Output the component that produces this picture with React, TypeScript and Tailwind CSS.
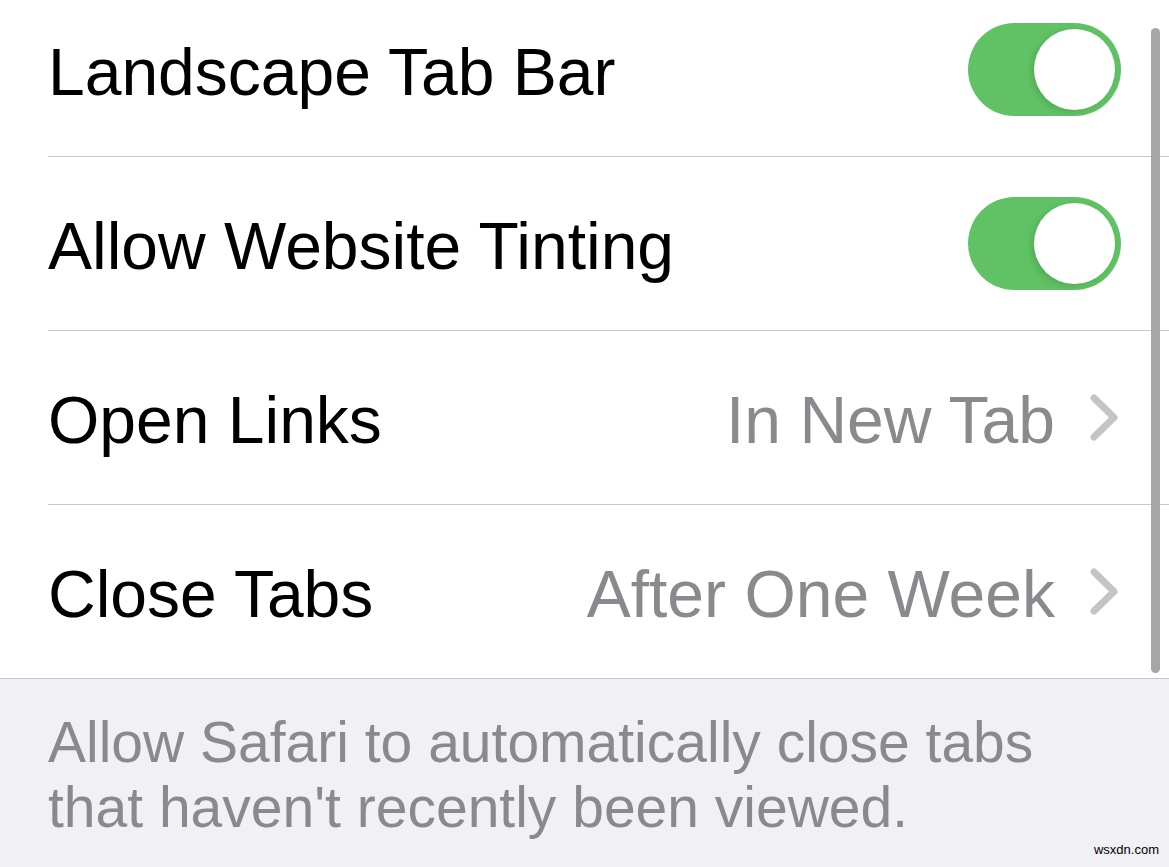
import React from "react";

const font = { fontFamily: '"Liberation Sans", Arial, sans-serif' };

function Toggle() {
  return (
    <div className="w-[153px] h-[93px] rounded-full bg-[#60c264] flex items-center justify-end pr-[6px] shrink-0">
      <div className="w-[81px] h-[81px] rounded-full bg-white shadow-[-3px_2px_6px_rgba(0,0,0,0.12)]" />
    </div>
  );
}

function Chevron() {
  return (
    <svg width="30" height="49" viewBox="0 0 30 49" className="shrink-0">
      <polyline
        points="5,5 25,24.5 5,44"
        fill="none"
        stroke="#c4c4c7"
        strokeWidth="7"
        strokeLinecap="round"
        strokeLinejoin="round"
      />
    </svg>
  );
}

function Row({
  label,
  children,
  divider = true,
}: {
  label: string;
  children: React.ReactNode;
  divider?: boolean;
}) {
  return (
    <div className="pl-[48px] bg-white">
      <div
        className={
          "flex items-center justify-between " +
          (divider ? "h-[174px] border-b border-[#c8c8cc]" : "h-[173px]")
        }
      >
        <span className="pt-[4px] text-[66px] leading-none text-black whitespace-nowrap">{label}</span>
        {children}
      </div>
    </div>
  );
}

export default function App() {
  return (
    <div className="relative w-[1169px] h-[867px] overflow-hidden bg-white" style={font}>
      <div className="-mt-[17px]">
        <Row label="Landscape Tab Bar">
          <div className="pr-[48px]">
            <Toggle />
          </div>
        </Row>
        <Row label="Allow Website Tinting">
          <div className="pr-[48px]">
            <Toggle />
          </div>
        </Row>
        <Row label="Open Links">
          <div className="flex items-center gap-[34px] pr-[50px]">
            <span className="pt-[4px] text-[66px] leading-none text-[#8a8a8e]">In New Tab</span>
            <Chevron />
          </div>
        </Row>
        <Row label="Close Tabs" divider={false}>
          <div className="flex items-center gap-[34px] pr-[50px]">
            <span className="pt-[4px] text-[66px] leading-none text-[#8a8a8e]">After One Week</span>
            <Chevron />
          </div>
        </Row>
        <div className="border-t border-[#c8c8cc] bg-[#f0f0f5] h-[260px] pl-[48px] pt-[31px]">
          <p className="text-[57px] leading-[65px] text-[#8a8a8e]">
            Allow Safari to automatically close tabs
            <br />
            that haven't recently been viewed.
          </p>
        </div>
      </div>

      {/* scroll indicator overlay */}
      <div className="absolute left-[1151px] top-[28px] w-[9px] h-[645px] rounded-full bg-[#a6a6a6]" />

      <span className="absolute right-[10px] bottom-[8px] text-[13px] text-black">
        wsxdn.com
      </span>
    </div>
  );
}
